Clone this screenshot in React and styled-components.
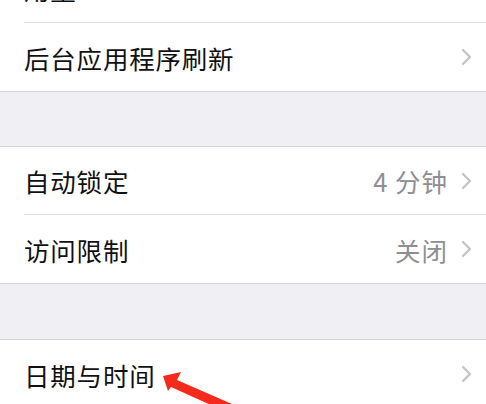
import React from 'react';
import styled, { createGlobalStyle } from 'styled-components';

const GlobalStyle = createGlobalStyle`
  html, body {
    margin: 0;
    padding: 0;
    background: #ffffff;
    overflow: hidden;
  }
  body {
    font-family: "Noto Sans CJK SC", "Noto Sans", sans-serif;
    -webkit-font-smoothing: antialiased;
  }
`;

const Page = styled.div`
  position: relative;
  width: 486px;
  height: 404px;
  overflow: hidden;
  display: flex;
  flex-direction: column;
`;

const Group = styled.div`
  background: #ffffff;
  border-top: ${(p) => (p.$noTop ? 'none' : '1px solid #d4d3d8')};
  border-bottom: 1px solid #d4d3d8;
  margin-top: ${(p) => p.$offset || 0}px;
  flex-shrink: 0;
`;

const Spacer = styled.div`
  height: ${(p) => p.$h}px;
  background: #efeff4;
  flex-shrink: 0;
`;

const Row = styled.div`
  padding-left: 24px;
`;

const RowInner = styled.div`
  height: 68px;
  display: flex;
  align-items: center;
  padding-right: 14px;
  box-sizing: border-box;
  border-bottom: ${(p) => (p.$last ? 'none' : '1px solid #dcdbe0')};
`;

const Label = styled.span`
  flex: 1;
  font-size: 25.5px;
  color: #111111;
  letter-spacing: 0.8px;
`;

const Value = styled.span`
  font-size: 25.5px;
  color: #8e8e93;
  margin-right: 13px;
  letter-spacing: 1px;
`;

const Chevron = () => (
  <svg width="11" height="18" viewBox="0 0 11 18">
    <path d="M2 2 L9 9 L2 16" fill="none" stroke="#c4c4c9" strokeWidth="2.4" strokeLinecap="round" strokeLinejoin="round" />
  </svg>
);

const ArrowLayer = styled.svg`
  position: absolute;
  left: 0;
  top: 0;
  pointer-events: none;
`;

const Item = ({ label, value, last }) => (
  <Row>
    <RowInner $last={last}>
      <Label>{label}</Label>
      {value && <Value>{value}</Value>}
      <Chevron />
    </RowInner>
  </Row>
);

export default function App() {
  return (
    <>
      <GlobalStyle />
      <Page>
        <Group $noTop $offset={-45}>
          <Item label="用量" />
          <Item label="后台应用程序刷新" last />
        </Group>
        <Spacer $h={54} />
        <Group>
          <Item label="自动锁定" value="4 分钟" />
          <Item label="访问限制" value="关闭" last />
        </Group>
        <Spacer $h={55} />
        <Group>
          <Item label="日期与时间" last />
        </Group>
        <ArrowLayer width="486" height="404" viewBox="0 0 486 404">
          <path d="M163 376 L181 372 L177 380 L232 404 L222 410 L171 387 L168 391 Z" fill="#f42a1c" />
        </ArrowLayer>
      </Page>
    </>
  );
}
